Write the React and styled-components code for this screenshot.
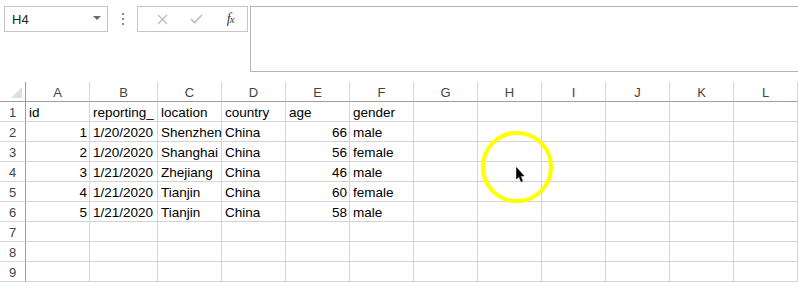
import { Fragment } from "react";
import styled, { createGlobalStyle } from "styled-components";

const GlobalStyle = createGlobalStyle`
  html, body {
    margin: 0;
    padding: 0;
    background: #ffffff;
    overflow: hidden;
  }
  body {
    font-family: "Liberation Sans", Arial, sans-serif;
  }
`;

const Page = styled.div`
  width: 798px;
  height: 286px;
  display: flex;
  flex-direction: column;
  overflow: hidden;
`;

const Toolbar = styled.div`
  display: flex;
  align-items: flex-start;
  height: 82px;
  padding: 6px 0 0 4px;
  box-sizing: border-box;
`;

const NameBox = styled.div`
  width: 104px;
  height: 26px;
  box-sizing: border-box;
  border: 1px solid #c6c6c6;
  display: flex;
  align-items: center;
  justify-content: space-between;
  padding: 0 6px 0 7px;
  font-size: 13px;
  color: #222;
`;

const Caret = styled.span`
  width: 0;
  height: 0;
  border-left: 4px solid transparent;
  border-right: 4px solid transparent;
  border-top: 4px solid #5d6d7e;
  margin-bottom: 3px;
`;

const Grip = styled.div`
  width: 29px;
  height: 26px;
  display: flex;
  flex-direction: column;
  align-items: center;
  justify-content: center;
  gap: 3px;
  padding-left: 1px;
  box-sizing: border-box;
`;

const GripDot = styled.span`
  width: 2px;
  height: 2px;
  background: #8a8a8a;
`;

const ButtonGroup = styled.div`
  width: 111px;
  height: 26px;
  box-sizing: border-box;
  border: 1px solid #c6c6c6;
  display: flex;
  align-items: center;
  padding-left: 8px;
`;

const IconButton = styled.span`
  width: 36px;
  height: 24px;
  display: flex;
  align-items: center;
  justify-content: center;
  color: ${({ $dark }) => ($dark ? "#3c3c3c" : "#bcbcbc")};
`;

const Fx = styled.span`
  font-family: "Liberation Serif", "Times New Roman", serif;
  font-style: italic;
  font-size: 14px;
  color: #3c3c3c;
  letter-spacing: -1px;

  small {
    font-size: 11px;
  }
`;

const FormulaInput = styled.div`
  flex: 1;
  height: 66px;
  margin-left: 2px;
  margin-right: -4px;
  box-sizing: border-box;
  border: 1px solid #b4b4b4;
  background: #fefefe;
`;

const SheetWrap = styled.div`
  position: relative;
`;

const Sheet = styled.div`
  display: grid;
  grid-template-columns: 26px 64px 68px repeat(10, 64px);
  grid-auto-rows: 20px;
  font-size: 13.5px;
  color: #000;
`;

const HeadCell = styled.div`
  box-sizing: border-box;
  border-right: 1px solid ${({ $edge }) => ($edge ? "#9e9e9e" : "#d8d8d8")};
  border-bottom: 1px solid #9e9e9e;
  display: flex;
  align-items: center;
  justify-content: center;
  color: #444;
  font-size: 13px;
  padding-top: 1px;
  position: relative;
`;

const Corner = styled.span`
  position: absolute;
  right: 3px;
  bottom: 3px;
  width: 0;
  height: 0;
  border-left: 11px solid transparent;
  border-bottom: 11px solid #dfdfdf;
`;

const RowHead = styled.div`
  box-sizing: border-box;
  border-right: 1px solid #9e9e9e;
  border-bottom: 1px solid #d8d8d8;
  display: flex;
  align-items: center;
  justify-content: center;
  color: #444;
  font-size: 13px;
  padding-top: 2px;
`;

const Cell = styled.div`
  box-sizing: border-box;
  border-right: 1px solid #d4d4d4;
  border-bottom: 1px solid #d4d4d4;
  display: flex;
  align-items: center;
  justify-content: ${({ $num }) => ($num ? "flex-end" : "flex-start")};
  padding: 2px 2px 0 3px;
  white-space: nowrap;
  overflow: ${({ $clip }) => ($clip ? "hidden" : "visible")};
`;

const Highlight = styled.div`
  position: absolute;
  left: 481px;
  top: 49px;
  width: 64px;
  height: 64px;
  border: 4px solid #ffff00;
  border-radius: 50%;
  box-shadow: 0 0 1px rgba(200, 200, 0, 0.6);
  pointer-events: none;
`;

const Pointer = styled.svg`
  position: absolute;
  left: 516px;
  top: 85px;
`;

const cols = ["A", "B", "C", "D", "E", "F", "G", "H", "I", "J", "K", "L"];

const rows = [
  ["id", "reporting_", "location", "country", "age", "gender"],
  [1, "1/20/2020", "Shenzhen", "China", 66, "male"],
  [2, "1/20/2020", "Shanghai", "China", 56, "female"],
  [3, "1/21/2020", "Zhejiang", "China", 46, "male"],
  [4, "1/21/2020", "Tianjin", "China", 60, "female"],
  [5, "1/21/2020", "Tianjin", "China", 58, "male"],
];

export default function App() {
  const allRows = Array.from({ length: 9 }, (_, i) => rows[i] || []);
  return (
    <Page>
      <GlobalStyle />
      <Toolbar>
        <NameBox>
          <span>H4</span>
          <Caret />
        </NameBox>
        <Grip>
          <GripDot />
          <GripDot />
          <GripDot />
        </Grip>
        <ButtonGroup>
          <IconButton>
            <svg width="11" height="11" viewBox="0 0 11 11">
              <path d="M1 1 L10 10 M10 1 L1 10" stroke="currentColor" strokeWidth="1.3" fill="none" />
            </svg>
          </IconButton>
          <IconButton>
            <svg width="13" height="10" viewBox="0 0 13 10">
              <path d="M1 5 L4.5 8.5 L12 1" stroke="currentColor" strokeWidth="1.6" fill="none" />
            </svg>
          </IconButton>
          <IconButton $dark>
            <Fx>
              f<small>x</small>
            </Fx>
          </IconButton>
        </ButtonGroup>
        <FormulaInput />
      </Toolbar>
      <SheetWrap>
        <Sheet>
          <HeadCell $edge>
            <Corner />
          </HeadCell>
          {cols.map((c) => (
            <HeadCell key={c}>{c}</HeadCell>
          ))}
          {allRows.map((r, i) => (
            <Fragment key={i}>
              <RowHead>{i + 1}</RowHead>
              {cols.map((c, j) => {
                const v = r[j];
                const num = typeof v === "number";
                return (
                  <Cell key={c} $num={num} $clip={j === 1}>
                    {v ?? ""}
                  </Cell>
                );
              })}
            </Fragment>
          ))}
        </Sheet>
        <Highlight />
        <Pointer width="10" height="17" viewBox="0 0 10 17">
          <path
            d="M0.5 0.5 L0.5 12 L3 9.5 L5 14.5 L6.5 14 L4.6 9 L8 9 Z"
            fill="#000"
            stroke="#000"
            strokeWidth="0.6"
          />
        </Pointer>
      </SheetWrap>
    </Page>
  );
}
